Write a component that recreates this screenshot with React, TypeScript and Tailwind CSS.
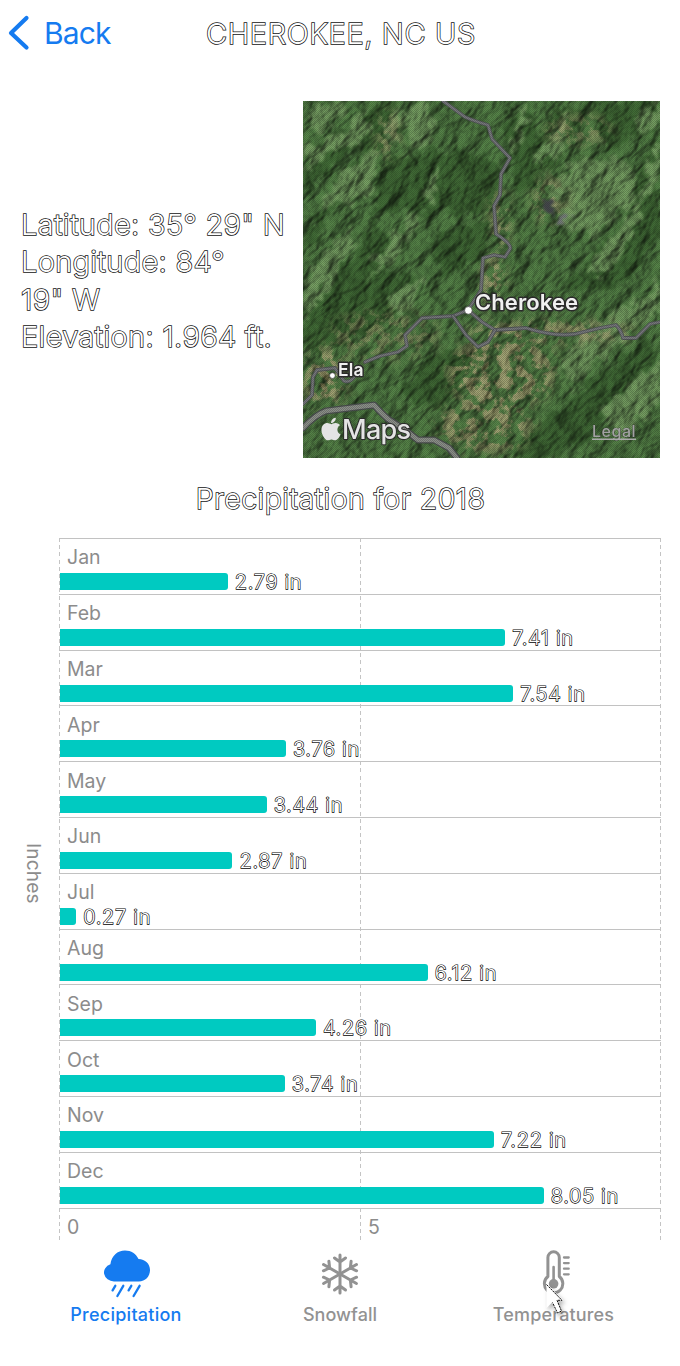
import React from "react";
import { FaApple } from "react-icons/fa";

const months = [
  { name: "Jan", value: "2.79" },
  { name: "Feb", value: "7.41" },
  { name: "Mar", value: "7.54" },
  { name: "Apr", value: "3.76" },
  { name: "May", value: "3.44" },
  { name: "Jun", value: "2.87" },
  { name: "Jul", value: "0.27" },
  { name: "Aug", value: "6.12" },
  { name: "Sep", value: "4.26" },
  { name: "Oct", value: "3.74" },
  { name: "Nov", value: "7.22" },
  { name: "Dec", value: "8.05" },
];

const PX_PER_INCH = 60.1;

const outlined = "font-light text-white [-webkit-text-stroke:1.5px_#111] [paint-order:stroke_fill]";
const outlinedSmall = "font-light text-white [-webkit-text-stroke:1.25px_#000] [paint-order:stroke_fill]";

function SatelliteMap() {
  const roads = [
    "M443 101L465 117Q474 121 488 125L492 139L510 158L501 174L500 195L494 206L496 234Q512 244 510 249L505 257L494 255L483 258L481 290L468 310L453 316L422 318L405 335L407 346L398 352L380 356L365 362",
    "M354 377Q350 383 344 381L335 368L317 370L313 377L312 395L303 404",
    "M468 310L482 322L495 330L526 328Q555 337 575 334L600 328L616 325Q621 330 623 338L636 338L650 324L660 322",
    "M453 316L466 335L478 347L488 342L495 330",
  ];
  const highway = "M303 428Q315 415 326 411L374 405Q382 414 388 419L405 430L418 440L434 440L449 448L457 458";
  return (
    <svg viewBox="303 101 357 357" className="block size-full">
      <defs>
        <filter id="relief" x="0" y="0" width="100%" height="100%" colorInterpolationFilters="sRGB">
          <feTurbulence type="fractalNoise" baseFrequency="0.04 0.08" numOctaves="4" seed="11" />
          <feColorMatrix values="0 0 0 0 0  0 0 0 0 0  0 0 0 0 0  1 0 0 0 0" />
          <feDiffuseLighting surfaceScale="6" diffuseConstant="0.72" lightingColor="#ffffff">
            <feDistantLight azimuth="225" elevation="50" />
          </feDiffuseLighting>
        </filter>
        <filter id="rough" x="-20%" y="-20%" width="140%" height="140%" colorInterpolationFilters="sRGB">
          <feTurbulence type="fractalNoise" baseFrequency="0.08" numOctaves="4" seed="4" result="n" />
          <feDisplacementMap in="SourceGraphic" in2="n" scale="24" xChannelSelector="R" yChannelSelector="G" />
          <feGaussianBlur stdDeviation="0.9" />
        </filter>
        <filter id="soil" x="-10%" y="-10%" width="120%" height="120%" colorInterpolationFilters="sRGB">
          <feTurbulence type="fractalNoise" baseFrequency="0.09" numOctaves="5" seed="23" />
          <feColorMatrix values="0 0 0 0 0.58  0 0 0 0 0.55  0 0 0 0 0.4  7 0 0 0 -3.1" result="spots" />
          <feGaussianBlur in="SourceAlpha" stdDeviation="7" result="soft" />
          <feComposite in="spots" in2="soft" operator="in" />
        </filter>
        <pattern id="grain" width="2" height="2" patternUnits="userSpaceOnUse">
          <rect width="1" height="1" fill="#1d2f1a" />
          <rect x="1" y="1" width="1" height="1" fill="#1d2f1a" />
        </pattern>
      </defs>
      <rect x="303" y="101" width="357" height="357" fill="#456a3a" />
      <g filter="url(#rough)" fill="#34562b">
        <path d="M303 150L345 128L370 112L385 101L400 101L380 150L350 150L303 200Z" />
        <path d="M303 240L345 170L365 150L345 190L310 250Z" />
        <path d="M385 160L430 150L490 155L500 200L480 215L410 210L370 215Z" />
        <path d="M303 330L340 280L375 215L390 240L350 300L310 350Z" />
        <path d="M430 240L495 215L480 260L440 280Z" />
        <path d="M505 120L530 101L535 140L555 110L590 101L550 170L520 200Z" />
        <path d="M590 101L650 101L660 125L610 150Z" />
        <path d="M560 290L625 220L660 120L660 230L620 290Z" />
        <path d="M520 440L580 390L640 340L660 350L590 440L550 458L515 458Z" />
        <path d="M303 300L350 260L420 280L390 320L330 350L303 350Z" />
        <path d="M400 390L440 350L480 350L450 400L420 410Z" />
      </g>
      <g filter="url(#rough)" fill="#5f804f">
        <path d="M310 108L345 102L342 118L325 128L306 132Z" />
        <path d="M303 150L345 130L366 112L370 130L355 146L330 152L303 175Z" />
        <path d="M382 145L388 118L398 102L402 126L394 148Z" />
        <path d="M315 205L345 172L378 148L373 192L345 203Z" />
        <path d="M303 300L320 255L350 225L353 245L335 280Z" />
        <path d="M368 278L385 247L415 210L417 226L395 260Z" />
        <path d="M402 110L425 103L436 125L425 145L408 150Z" />
        <path d="M425 192L440 160L440 178L430 204Z" />
        <path d="M520 101L527 101L523 145L510 155Z" />
        <path d="M540 150L570 110L565 150L535 165Z" />
        <path d="M548 185L580 158L625 160L638 195L600 235L560 228Z" />
        <path d="M588 275L620 225L645 195L635 230L610 270Z" />
        <path d="M640 200L655 145L660 170L655 195Z" />
        <path d="M635 120L660 101L660 118L640 135Z" />
        <path d="M560 360L590 320L640 300L660 280L660 310L610 350L570 390Z" />
        <path d="M303 295L330 275L320 300L303 320Z" />
        <path d="M600 410L660 360L660 400L620 440Z" />
        <path d="M385 300L425 275L420 300L400 315Z" />
      </g>
      <g filter="url(#soil)">
        <ellipse cx="493" cy="282" rx="10" ry="28" />
        <ellipse cx="502" cy="372" rx="54" ry="36" opacity="0.85" />
        <ellipse cx="485" cy="425" rx="48" ry="28" opacity="0.8" />
        <ellipse cx="325" cy="378" rx="22" ry="30" opacity="0.9" />
        <ellipse cx="385" cy="335" rx="55" ry="24" opacity="0.5" />
        <ellipse cx="550" cy="332" rx="85" ry="9" />
        <ellipse cx="550" cy="200" rx="16" ry="24" opacity="0.7" />
        <ellipse cx="578" cy="130" rx="34" ry="14" opacity="0.6" />
        <ellipse cx="388" cy="135" rx="10" ry="24" opacity="0.7" />
        <ellipse cx="500" cy="220" rx="8" ry="30" />
      </g>
      <g className="mix-blend-overlay" opacity="0.65">
        <rect x="103" y="-99" width="757" height="757" filter="url(#relief)" transform="rotate(-42 481 280)" />
      </g>
      <g filter="url(#rough)" fill="#45454c">
        <path d="M541 195L554 203L552 217L545 209Z" />
        <path d="M558 218L570 216L568 226L560 224Z" fill="#77777f" />
      </g>
      <g fill="none" strokeLinejoin="round" strokeLinecap="round">
        {roads.map((d) => (
          <g key={d}>
            <path d={d} stroke="#535458" strokeWidth="3.8" />
            <path d={d} stroke="#77767d" strokeWidth="2.2" />
          </g>
        ))}
        <path d={highway} stroke="#4b4d50" strokeWidth="7" />
        <path d={highway} stroke="#8b8c89" strokeWidth="4.4" />
      </g>
      <rect x="303" y="101" width="357" height="357" fill="url(#grain)" opacity="0.26" />
      <circle cx="468.4" cy="310.4" r="3.8" fill="#fff" stroke="#333" strokeWidth="0.6" />
      <circle cx="332.4" cy="375.6" r="2.8" fill="#fff" stroke="#333" strokeWidth="0.6" />
      <g fontFamily="Inter, sans-serif" fill="#f0f0f0" stroke="#2a2a2a" strokeLinejoin="round" paintOrder="stroke">
        <text x="475" y="309.5" fontSize="22" fontWeight="600" strokeWidth="3" textLength="103">Cherokee</text>
        <text x="338" y="376" fontSize="17.5" fontWeight="600" strokeWidth="3" textLength="25.5">Ela</text>
        <text x="342" y="439" fontSize="27" fontWeight="500" fill="#e4e4e4" strokeWidth="2" textLength="69">Maps</text>
        <text x="592" y="437" fontSize="16" fontWeight="500" fill="#a2a2a2" strokeWidth="0.5" textLength="43.5">Legal</text>
      </g>
      <path d="M592 439.3H636" stroke="#a9a9a9" strokeWidth="1.4" />
      <FaApple x="318" y="416" size={26} color="#e4e4e4" />
    </svg>
  );
}

function RainCloud() {
  return (
    <svg viewBox="0 0 50 50" className="size-[50px]" fill="none">
      <path d="M13 32.5a10.4 9 0 0 1-3.6-17.3C10.5 6.8 16.5 1.5 24 1.5c6.2 0 11.2 3.3 13.5 8.6 6.7.1 11.5 4.8 11.5 10.9 0 6.5-4.7 11.5-11.2 11.5Z" fill="#157bf0" />
      <path d="M14.3 36.8L11.6 41.4M22.3 36.8L16.4 47M30.3 36.8L27.6 41.4M38.6 36.8L32.6 47" stroke="#157bf0" strokeWidth="2.3" strokeLinecap="round" />
    </svg>
  );
}

function Snowflake() {
  return (
    <svg viewBox="-25 -25 50 50" className="size-[50px]" fill="none" stroke="#929292" strokeWidth="3" strokeLinecap="round" strokeLinejoin="round">
      {[0, 60, 120, 180, 240, 300].map((a) => (
        <path key={a} transform={`rotate(${a})`} d="M0 0V-19M-5.5 -16L0 -12L5.5 -16" />
      ))}
    </svg>
  );
}

function Thermometer() {
  return (
    <svg viewBox="0 -1 50 50" className="size-[50px]" fill="none" stroke="#929292" strokeLinecap="round">
      <path d="M18.9 7.5a5.7 5.7 0 0 1 11.4 0V26.5a9.2 9.2 0 1 1-11.4 0Z" strokeWidth="3" strokeLinejoin="round" />
      <path d="M24.6 17V34" strokeWidth="2.6" />
      <circle cx="24.6" cy="33.8" r="4.8" fill="#929292" stroke="none" />
      <path d="M35 7.5H39.7M35 13.1H39.7M35 18.7H39.7M35 24.3H39.7" strokeWidth="2.3" />
    </svg>
  );
}

export default function App() {
  return (
    <div className="flex h-[1366px] w-[680px] flex-col overflow-hidden bg-white font-['Inter',sans-serif] antialiased">
      <header className="grid h-[101px] shrink-0 grid-cols-[206px_1fr] items-start">
        <button className="flex h-[66px] items-center gap-[14px] pl-[8px] text-left">
          <svg viewBox="0 0 22 36" className="h-[36px] w-[22px]" fill="none" stroke="#157bf0" strokeWidth="4.2" strokeLinecap="round" strokeLinejoin="round">
            <path d="M18.5 3L3 18L18.5 32.5" />
          </svg>
          <span className="text-[30px] tracking-[-0.9px] text-[#157bf0]">Back</span>
        </button>
        <h1 className={`flex h-[67px] items-center whitespace-nowrap text-[29px] tracking-[0.6px] ${outlined}`}>CHEROKEE, NC US</h1>
      </header>

      <section className="flex h-[357px] shrink-0 items-center">
        <div className={`w-[303px] whitespace-nowrap pl-[21px] pt-[2px] text-[29px] leading-[37.5px] tracking-[0.3px] ${outlined}`}>
          <p>Latitude: 35° 29" N</p>
          <p>Longitude: 84°</p>
          <p>19" W</p>
          <p>Elevation: 1.964 ft.</p>
        </div>
        <div className="size-[357px]">
          <SatelliteMap />
        </div>
      </section>

      <h2 className={`flex h-[80px] shrink-0 items-center justify-center whitespace-nowrap pl-px pt-[2px] text-[28.5px] tracking-[0.45px] ${outlined}`}>Precipitation for 2018</h2>

      <section className="flex h-[702px] shrink-0">
        <div className="flex w-[59px] items-center justify-center pb-[32px] pl-[6px]">
          <span className="text-[19px] tracking-[0.2px] text-[#8c8c8c] [writing-mode:vertical-rl]">Inches</span>
        </div>
        <div className="relative w-[602px]">
          <div className="absolute inset-0 flex justify-between">
            <i className="w-px bg-[repeating-linear-gradient(to_bottom,#c4c4c4_0_4px,transparent_4px_7.2px)]" />
            <i className="w-px bg-[repeating-linear-gradient(to_bottom,#c4c4c4_0_4px,transparent_4px_7.2px)]" />
            <i className="w-px bg-[repeating-linear-gradient(to_bottom,#c4c4c4_0_4px,transparent_4px_7.2px)]" />
          </div>
          <div className="relative">
            {months.map((m) => (
              <div key={m.name} className="h-[55.8px] border-t border-[#c2c2c2] pl-px">
                <div className="flex h-[33.6px] items-center pl-[7px] pt-[4.5px] text-[19.5px] text-[#8c8c8c]">{m.name}</div>
                <div className="flex h-[18px] items-center gap-[7px]">
                  <div className="h-[17px] rounded-r-[3px] bg-[#00cac1]" style={{ width: Number(m.value) * PX_PER_INCH }} />
                  <span className={`whitespace-nowrap pt-px text-[20px] leading-[18px] tracking-[0.7px] ${outlinedSmall}`}>{m.value} in</span>
                </div>
              </div>
            ))}
            <div className="flex h-[32px] items-center border-t border-[#c2c2c2] pt-[7px] text-[19.5px] text-[#8c8c8c]">
              <span className="w-[301px] pl-[8px]">0</span>
              <span className="pl-[8px]">5</span>
            </div>
          </div>
        </div>
      </section>

      <nav className="relative flex shrink-0 pl-[19px] pt-[9px]">
        <div className="flex w-[214px] flex-col items-center text-[18px] font-medium text-[#157bf0]">
          <RainCloud />
          <span className="leading-[32px] tracking-[0.25px]">Precipitation</span>
        </div>
        <div className="flex w-[214px] flex-col items-center text-[18px] font-medium text-[#929292]">
          <Snowflake />
          <span className="leading-[32px] tracking-[0.05px]">Snowfall</span>
        </div>
        <div className="flex w-[213px] flex-col items-center text-[18px] font-medium text-[#929292]">
          <Thermometer />
          <span className="leading-[32px] tracking-[0.15px]">Temperatures</span>
        </div>
        <svg viewBox="0 0 24 36" className="absolute left-[544px] top-[42px] h-[36px] w-[24px] overflow-visible drop-shadow-[2px_3px_2px_rgba(0,0,0,0.3)]">
          <path d="M2.5 1.5V26L8 20.5L13 31.5L17.5 29.5L12.8 18.5H19.5Z" fill="#fff" />
          <path d="M2.5 2.5L18 18.3H13L17.5 29L13.5 31L8.5 20.5" fill="none" stroke="#111" strokeWidth="1" strokeDasharray="2.2 0.8" />
        </svg>
      </nav>
    </div>
  );
}
